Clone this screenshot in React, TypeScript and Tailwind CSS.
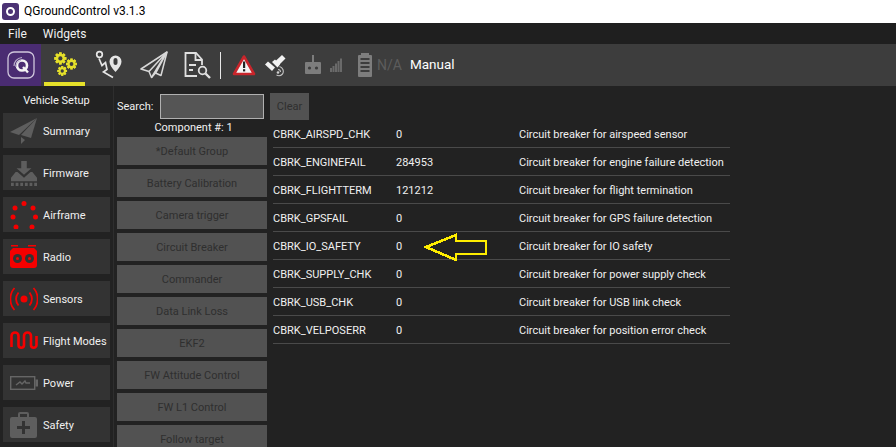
import type { ReactNode } from 'react';

const FONT = "font-['Roboto','Noto_Sans',sans-serif]";

// ── Icons ─────────────────────────────────────────────────────────────────────

function Gear({ cx, cy, r }: { cx: number; cy: number; r: number }) {
  const teeth = [0, 45, 90, 135, 180, 225, 270, 315];
  return (
    <g>
      {teeth.map((a) => (
        <rect key={a} x={cx - r * 0.28} y={cy - r * 1.3} width={r * 0.56} height={r * 2.6} fill="#e5e02a" transform={`rotate(${a} ${cx} ${cy})`} />
      ))}
      <circle cx={cx} cy={cy} r={r} fill="#e5e02a" />
      <circle cx={cx} cy={cy} r={r * 0.45} fill="#3d3d3d" />
    </g>
  );
}

function QgcLogo() {
  return (
    <svg width="28" height="28" viewBox="0 0 28 28" fill="none">
      <rect x="1" y="1" width="26" height="26" rx="6" stroke="#cfc6dc" strokeWidth="1.3" />
      <circle cx="15" cy="14.500" r="5" stroke="#f4f4f4" strokeWidth="2.600" />
      <path d="M16 16l5 5.500" stroke="#f4f4f4" strokeWidth="2.400" />
      <path d="M7 15c0-4 3-8 8-8.500M9 16c0-3 2-6 5-6.500" stroke="#b9aecb" strokeWidth="1.200" />
    </svg>
  );
}

function PlanIcon() {
  return (
    <svg width="28" height="30" viewBox="0 0 28 30" fill="none" stroke="#e6e6e6" strokeWidth="1.700">
      <circle cx="4.500" cy="4.500" r="2.800" />
      <path d="M4 8.500l3 7 3.500-3 1.500 7-3.500 2.500 9.500 5.500" />
      <path d="M20.500 22c-4-4.500-6-7.500-6-10.500a6 6 0 0 1 12 0c0 3-2 6-6 10.500z" fill="#e6e6e6" stroke="none" />
      <rect x="18.500" y="8" width="4" height="7" rx="2" fill="#3d3d3d" stroke="none" />
    </svg>
  );
}

function PlaneIcon() {
  return (
    <svg width="28" height="28" viewBox="0 0 28 28" fill="none" stroke="#d8d8d8" strokeWidth="1.500" strokeLinejoin="round">
      <path d="M27 1L1 18l8 2.500 2.500 6 4-4.500 5.500 2.500z" />
      <path d="M27 1L9 20.500M27 1L11.500 26.500M27 1L15.500 22.500" />
    </svg>
  );
}

function SummaryPlane() {
  return (
    <svg width="28" height="28" viewBox="0 0 28 28" fill="#5e5e5e">
      <path d="M27 1L0 15l9 3z" />
      <path d="M27 1L11 18l10 3z" />
      <path d="M11 20l0 7 4-4z" />
    </svg>
  );
}

function AnalyzeIcon() {
  return (
    <svg width="28" height="27" viewBox="0 0 28 27" fill="none" stroke="#e0e0e0" strokeWidth="1.800">
      <path d="M18 13V7.500L12 1H1.500v23H13" />
      <path d="M11.500 1.500V8H18" />
      <path d="M5 13h7M5 18h4" />
      <circle cx="18.500" cy="18.500" r="3.800" />
      <path d="M21.500 21.500l4.500 4.500" strokeWidth="2.400" />
    </svg>
  );
}

function WarningIcon() {
  return (
    <svg width="24" height="22" viewBox="0 0 24 22">
      <path d="M12 2.500L22 20H2z" fill="#f4f4f4" stroke="#c9252b" strokeWidth="2.600" strokeLinejoin="round" />
      <rect x="11" y="7.500" width="2.200" height="6.500" fill="#222" />
      <rect x="11" y="15.200" width="2.200" height="2.200" fill="#222" />
    </svg>
  );
}

function SatelliteIcon() {
  return (
    <svg width="22" height="23" viewBox="0 0 22 23" fill="#f2f2f2">
      <path d="M11 7.500L18 1l3.500 3.500-7 7z" />
      <path d="M1 10.500l3-3 7 6-3 3.500z" />
      <path d="M8 8l3-2.500 5 5-2.500 3z" />
      <path d="M15.500 12.500a5 5 0 0 1 3 7.500 5 5 0 0 1-6 1" fill="none" stroke="#c4c4c4" strokeWidth="1.100" />
      <path d="M14 15.500a2.500 2.500 0 0 1 2.500 2.500" fill="none" stroke="#c4c4c4" strokeWidth="1.100" />
      <circle cx="14" cy="18.500" r="1.300" fill="#d0d0d0" />
    </svg>
  );
}

function RcIcon() {
  return (
    <svg width="18" height="20" viewBox="0 0 18 20" fill="#7d7d7d">
      <rect x="8" y="0" width="2" height="8" />
      <rect x="1" y="7" width="16" height="12" rx="1" />
      <circle cx="5.500" cy="13" r="1.600" fill="#3d3d3d" />
      <circle cx="12.500" cy="13" r="1.600" fill="#3d3d3d" />
    </svg>
  );
}

function SignalIcon() {
  return (
    <svg width="12" height="14" viewBox="0 0 12 14" fill="#6a6a6a">
      <rect x="0" y="10" width="2" height="4" />
      <rect x="2.500" y="8" width="2" height="6" />
      <rect x="5" y="5.500" width="2" height="8.500" />
      <rect x="7.500" y="3" width="2" height="11" />
      <rect x="10" y="0.500" width="2" height="13.500" />
    </svg>
  );
}

function BatteryIcon() {
  return (
    <svg width="14" height="24" viewBox="0 0 14 24" fill="#7d7d7d">
      <rect x="3" y="0" width="8" height="2" />
      <path d="M1 2h12a1 1 0 0 1 1 1v20a1 1 0 0 1-1 1H1a1 1 0 0 1-1-1V3a1 1 0 0 1 1-1z" />
      <path d="M2.500 5h9v2h-9zM2.500 9h9v2h-9zM2.500 13h9v2h-9zM2.500 17h9v2h-9z" fill="#3d3d3d" />
    </svg>
  );
}

function FirmwareIcon() {
  return (
    <svg width="28" height="26" viewBox="0 0 28 28" fill="#5e5e5e">
      <path d="M11 1h6v8h5l-8 7-8-7h5z" />
      <path d="M0 23v-4l5-6h2l7 6 7-6h2l5 6v4z" />
      <path d="M0 24.500h3V28H0zM5 24.500h3V28H5zM10 24.500h3V28h-3zM15 24.500h3V28h-3zM20 24.500h3V28h-3zM25 24.500h3V28h-3z" />
    </svg>
  );
}

function AirframeIcon() {
  const dots = [[3, 16], [5, 7], [14, 2.500], [23, 7], [25.500, 16], [6, 26], [22, 26]];
  return (
    <svg width="28" height="28" viewBox="0 0 28 28" fill="#f50000">
      {dots.map(([x, y]) => (
        <circle key={`${x}-${y}`} cx={x} cy={y} r="2.500" />
      ))}
    </svg>
  );
}

function RadioIcon() {
  return (
    <svg width="27" height="23" viewBox="0 0 27 23">
      <path d="M1 0h7v1.500H1zM18 0h8v1.500h-8z" fill="#f50000" />
      <path d="M3 3h21l3 3v14a3 3 0 0 1-3 3H3a3 3 0 0 1-3-3V6z" fill="#f50000" />
      <circle cx="7.500" cy="13.500" r="4.500" fill="#333" />
      <circle cx="19.500" cy="13.500" r="4.500" fill="#333" />
      <circle cx="7.500" cy="13.500" r="1.500" fill="#f50000" />
      <circle cx="19.500" cy="13.500" r="1.500" fill="#f50000" />
    </svg>
  );
}

function SensorsIcon() {
  return (
    <svg width="28" height="24" viewBox="0 0 28 24" fill="none" stroke="#f50000" strokeWidth="1.800">
      <circle cx="14" cy="12" r="3.500" fill="#f50000" stroke="none" />
      <path d="M8.500 5.500c-3 4-3 9 0 13M19.500 5.500c3 4 3 9 0 13" />
      <path d="M4.500 1c-5.500 6-5.500 16 0 22M23.500 1c5.500 6 5.500 16 0 22" />
    </svg>
  );
}

function FlightModesIcon() {
  return (
    <svg width="28" height="21" viewBox="0 0 28 21" fill="none" stroke="#f50000" strokeWidth="2.600">
      <path d="M1.500 17V6a3.500 3.500 0 0 1 7 0v9a2.700 2.700 0 0 0 5.500 0V6a3.500 3.500 0 0 1 7 0v9a2.700 2.700 0 0 0 5.500 0V6" />
    </svg>
  );
}

function PowerIcon() {
  return (
    <svg width="28" height="14" viewBox="0 0 28 14" fill="none" stroke="#666" strokeWidth="1.400">
      <rect x="0.700" y="0.700" width="24" height="12.600" />
      <rect x="25.500" y="3.500" width="2.500" height="7" fill="#666" stroke="none" />
      <path d="M6 9l4-3 2 2 3-3 1 2h4" />
    </svg>
  );
}

function SafetyIcon() {
  return (
    <svg width="27" height="26" viewBox="0 0 27 26" fill="#5e5e5e">
      <path d="M8 6V2a2 2 0 0 1 2-2h7a2 2 0 0 1 2 2v4h-2V2h-7v4z" />
      <path d="M2 5h23a2 2 0 0 1 2 2v17a2 2 0 0 1-2 2H2a2 2 0 0 1-2-2V7a2 2 0 0 1 2-2z" />
      <path d="M12 9h3v5h5v3h-5v5h-3v-5H7v-3h5z" fill="#333" />
    </svg>
  );
}

// ── Data ──────────────────────────────────────────────────────────────────────

const SETUP: { label: string; icon: ReactNode }[] = [
  { label: 'Summary', icon: <SummaryPlane /> },
  { label: 'Firmware', icon: <FirmwareIcon /> },
  { label: 'Airframe', icon: <AirframeIcon /> },
  { label: 'Radio', icon: <RadioIcon /> },
  { label: 'Sensors', icon: <SensorsIcon /> },
  { label: 'Flight Modes', icon: <FlightModesIcon /> },
  { label: 'Power', icon: <PowerIcon /> },
  { label: 'Safety', icon: <SafetyIcon /> },
];

const GROUPS = [
  '*Default Group',
  'Battery Calibration',
  'Camera trigger',
  'Circuit Breaker',
  'Commander',
  'Data Link Loss',
  'EKF2',
  'FW Attitude Control',
  'FW L1 Control',
  'Follow target',
];

const PARAMS = [
  ['CBRK_AIRSPD_CHK', '0', 'Circuit breaker for airspeed sensor'],
  ['CBRK_ENGINEFAIL', '284953', 'Circuit breaker for engine failure detection'],
  ['CBRK_FLIGHTTERM', '121212', 'Circuit breaker for flight termination'],
  ['CBRK_GPSFAIL', '0', 'Circuit breaker for GPS failure detection'],
  ['CBRK_IO_SAFETY', '0', 'Circuit breaker for IO safety'],
  ['CBRK_SUPPLY_CHK', '0', 'Circuit breaker for power supply check'],
  ['CBRK_USB_CHK', '0', 'Circuit breaker for USB link check'],
  ['CBRK_VELPOSERR', '0', 'Circuit breaker for position error check'],
];

// ── Page ──────────────────────────────────────────────────────────────────────

export default function App() {
  return (
    <div className={`${FONT} flex h-[447px] w-[896px] flex-col overflow-hidden bg-[#222222] text-[11px] text-[#f0f0f0]`}>
      <div className="flex h-[23px] items-center gap-[5px] bg-white pl-[2px] text-[12px] text-black">
        <div className="flex h-[17px] w-[17px] items-center justify-center rounded-[3px] bg-[#4b3274]">
          <div className="h-[9px] w-[9px] rounded-full border-2 border-white" />
        </div>
        <span className="pb-[2px]">QGroundControl v3.1.3</span>
      </div>

      <div className="flex h-[21px] items-center gap-[16px] bg-[#1f1f1f] pl-[8px] text-[12px]">
        <span>File</span>
        <span>Widgets</span>
      </div>

      <div className="flex h-[42px] items-center bg-[#3d3d3d]">
        <div className="flex h-full w-[41px] shrink-0 items-center justify-center bg-[#4a2c72]">
          <QgcLogo />
        </div>
        <div className="ml-[3px] flex h-[42px] w-[41px] shrink-0 items-center justify-center border-b-[4px] border-b-[#e5e02a] pt-[2px]">
          <svg width="28" height="26" viewBox="0 0 28 28">
            <Gear cx={9} cy={8} r={5} />
            <Gear cx={21} cy={14} r={4.500} />
            <Gear cx={11} cy={21.500} r={4} />
          </svg>
        </div>
        <div className="ml-[10px]"><PlanIcon /></div>
        <div className="ml-[17px]"><PlaneIcon /></div>
        <div className="ml-[16px]"><AnalyzeIcon /></div>
        <div className="ml-[8px] h-[27px] w-px bg-[#e8e8e8]" />
        <div className="ml-[11px]"><WarningIcon /></div>
        <div className="ml-[8px]"><SatelliteIcon /></div>
        <div className="ml-[18px]"><RcIcon /></div>
        <div className="ml-[8px]"><SignalIcon /></div>
        <div className="ml-[16px]"><BatteryIcon /></div>
        <span className="ml-[5px] text-[14px] text-[#5c5c5c]">N/A</span>
        <span className="ml-[8px] pb-[2px] text-[13.500px] text-white">Manual</span>
      </div>

      <div className="relative flex flex-1 overflow-hidden">
        <div className="flex w-[114px] shrink-0 flex-col border-r border-[#2e2e2e] pl-[3px] pr-[2px]">
          <div className="mt-[7px] mb-[4px] h-[16px] w-[107px] text-center leading-[16px]">Vehicle Setup</div>
          <div className="flex flex-col gap-[7px]">
            {SETUP.map((s) => (
              <div key={s.label} className="flex h-[35px] w-[107px] shrink-0 items-center bg-[#333333]">
                <div className="flex w-[40px] shrink-0 justify-center pl-[1px]">{s.icon}</div>
                <span className="whitespace-nowrap pt-[4px]">{s.label}</span>
              </div>
            ))}
          </div>
        </div>

        <div className="flex w-[156px] shrink-0 flex-col pl-[3px]">
          <div className="mt-[8px] flex items-center">
            <span className="w-[43px] pt-[2px]">Search:</span>
            <div className="h-[25px] w-[104px] border border-[#b0b0b0] bg-[#555555]" />
          </div>
          <div className="h-[17px] text-center leading-[17px]">Component #: 1</div>
          <div className="mt-[1px] flex flex-col gap-[4px]">
            {GROUPS.map((g) => (
              <div key={g} className="flex h-[28px] w-[150px] shrink-0 items-center justify-center bg-[#525252] pt-[2px] text-[#2f2f2f]">
                {g}
              </div>
            ))}
          </div>
        </div>

        <div className="ml-[3px] flex w-[457px] shrink-0 flex-col">
          <div className="flex h-[34px] shrink-0 items-start pt-[7px]">
            <div className="-ml-[3px] flex h-[27px] w-[39px] items-center justify-center bg-[#525252] pt-[2px] text-[#2f2f2f]">Clear</div>
          </div>
          <div className="flex flex-col">
            {PARAMS.map(([name, value, desc]) => (
              <div key={name} className="flex h-[28px] shrink-0 items-center border-b border-[#4a4a4a] pt-[3px]">
                <span className="w-[123px] shrink-0 whitespace-nowrap">{name}</span>
                <span className="w-[123px] shrink-0">{value}</span>
                <span className="whitespace-nowrap">{desc}</span>
              </div>
            ))}
          </div>
        </div>

        <svg className="absolute left-[424px] top-[147px]" width="64" height="28" viewBox="0 0 64 28" fill="none" shapeRendering="crispEdges">
          <path d="M2 14L32 2V8H62V21H32V27z" stroke="#ffee00" strokeWidth="2.600" />
        </svg>
      </div>
    </div>
  );
}
